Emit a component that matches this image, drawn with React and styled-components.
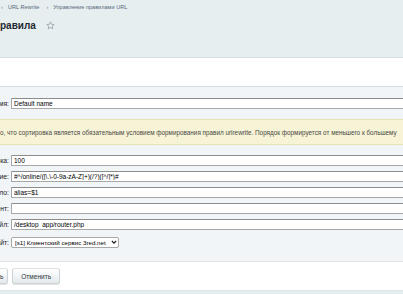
import React from "react";
import styled, { createGlobalStyle } from "styled-components";

const GlobalStyle = createGlobalStyle`
  html, body {
    margin: 0;
    padding: 0;
    background: #e5ecef;
    overflow: hidden;
  }
  body {
    font-family: "Liberation Sans", Arial, sans-serif;
    color: #000;
  }
`;

const crumbs = ["URL Rewrite", "Управление правилами URL"];

const rows = [
  { id: "sort", label: "Сортировка:", value: "100" },
  { id: "cond", label: "Условие:", value: "#^/online/([\\.\\-0-9a-zA-Z]+)(/?)([^/]*)#" },
  { id: "rule", label: "Правило:", value: "alias=$1" },
  { id: "comp", label: "Компонент:", value: "" },
  { id: "file", label: "Файл:", value: "/desktop_app/router.php" },
];

const App = () => {
  return (
    <Page>
      <GlobalStyle />
      <Header>
        <Crumbs>
          {crumbs.map((c) => (
            <React.Fragment key={c}>
              <Sep>›</Sep>
              <Crumb>{c}</Crumb>
            </React.Fragment>
          ))}
        </Crumbs>
        <TitleRow>
          <Title>равила</Title>
          <svg width="9" height="9" viewBox="0 0 24 24">
            <path
              d="M12 2.5l2.9 6.3 6.8.7-5.1 4.6 1.5 6.7L12 17.4l-6.1 3.4 1.5-6.7-5.1-4.6 6.8-.7z"
              fill="none"
              stroke="#8f9ca6"
              strokeWidth="2"
              strokeLinejoin="round"
            />
          </svg>
        </TitleRow>
      </Header>
      <Tabs />
      <Form>
        <Row>
          <Label>Имя:</Label>
          <Input defaultValue="Default name" />
        </Row>
        <Notice>
          о, что сортировка является обязательным условием формирования правил urlrewrite. Порядок формируется от меньшего к большему
        </Notice>
        {rows.map((row) => (
          <Row key={row.id}>
            <Label>{row.label}</Label>
            <Input defaultValue={row.value} />
          </Row>
        ))}
        <Row $tall>
          <Label>Сайт:</Label>
          <SelectBox>
            <Select defaultValue="s1">
              <option value="s1">[s1] Клиентский сервис 3red.net</option>
            </Select>
            <Chevron width="6" height="5" viewBox="0 0 10 8">
              <path d="M1.5 1.5l3.5 3.5 3.5-3.5" fill="none" stroke="#222" strokeWidth="2" />
            </Chevron>
          </SelectBox>
        </Row>
      </Form>
      <Footer>
        <Button $cut>Сохранить</Button>
        <Button>Отменить</Button>
      </Footer>
    </Page>
  );
};

export default App;

const Page = styled.div`
  width: 403px;
  height: 294px;
  overflow: hidden;
  background: #e5ecef;
`;

const Header = styled.header`
  height: 57px;
  background: #e6eef0;
  border-bottom: 1px solid #d4dde1;
`;

const Crumbs = styled.nav`
  display: flex;
  align-items: center;
  gap: 4px;
  height: 14px;
  padding-left: 1px;
  font-size: 5.6px;
  color: #56697a;
`;

const Sep = styled.span`
  color: #7b8a96;
  & + span {
    margin-left: 1px;
  }
  &:not(:first-child) {
    margin-left: 3px;
  }
`;

const Crumb = styled.span``;

const TitleRow = styled.div`
  display: flex;
  align-items: center;
  gap: 10px;
  height: 22px;
`;

const Title = styled.h1`
  margin: 0;
  font-size: 10px;
  font-weight: bold;
  color: #1f2a30;
`;

const Tabs = styled.div`
  height: 28px;
  background: #fff;
  border-bottom: 1px solid #d8dfe3;
`;

const Form = styled.div`
  background: #f2f5f7;
  padding: 9px 0 13px;
  border-bottom: 1px solid #dde3e6;
`;

const Row = styled.div`
  display: grid;
  grid-template-columns: 9px 1fr;
  column-gap: 2px;
  align-items: center;
  height: 11px;
  padding: ${(p) => (p.$tall ? "4px 0 0" : "2px 0 3px")};
`;

const Label = styled.label`
  display: flex;
  justify-content: flex-end;
  white-space: nowrap;
  font-size: 6.8px;
  color: #222;
`;

const Input = styled.input`
  box-sizing: border-box;
  width: 600px;
  height: 11px;
  margin: 0;
  padding: 0 2px;
  border: 1px solid #a8a8a8;
  border-top-color: #8c8c8c;
  border-radius: 1px;
  background: #fff;
  font-family: "Liberation Sans", Arial, sans-serif;
  font-size: 6.5px;
  color: #000;
  outline: none;
`;

const Notice = styled.div`
  box-sizing: border-box;
  height: 26px;
  margin: 7px 0 8px;
  display: flex;
  align-items: center;
  background: #f7f3d6;
  border-top: 1px solid #e8e1b4;
  border-bottom: 1px solid #e8e1b4;
  font-size: 6.35px;
  color: #4a4a45;
  white-space: nowrap;
`;

const SelectBox = styled.div`
  position: relative;
  width: 108px;
  height: 11px;
`;

const Select = styled.select`
  box-sizing: border-box;
  appearance: none;
  display: block;
  width: 100%;
  height: 11px;
  margin: 0;
  padding: 0 8px 0 3px;
  border: 1px solid #a8a8a8;
  border-radius: 2px;
  background: #fff;
  font-family: "Liberation Sans", Arial, sans-serif;
  font-size: 6.2px;
  line-height: 9px;
  color: #000;
  outline: none;
`;

const Chevron = styled.svg`
  position: absolute;
  right: 2px;
  top: 3px;
  pointer-events: none;
`;

const Footer = styled.div`
  display: flex;
  gap: 4px;
  height: 22px;
  padding-top: 6px;
  background: #fff;
  border-bottom: 1px solid #e0e6e8;
`;

const Button = styled.button`
  box-sizing: border-box;
  height: 16px;
  margin: 0 0 0 ${(p) => (p.$cut ? "-38px" : "0")};
  padding: ${(p) => (p.$cut ? "0 4px 0 8px" : "0 8px")};
  border: 1px solid #ccd3d6;
  border-top-color: #dde2e4;
  border-radius: 3px;
  background: linear-gradient(#ffffff, #e4e9ec);
  box-shadow: 0 1px 1px rgba(0, 0, 0, 0.12);
  font-family: "Liberation Sans", Arial, sans-serif;
  font-size: 6.5px;
  color: #30393e;
`;
